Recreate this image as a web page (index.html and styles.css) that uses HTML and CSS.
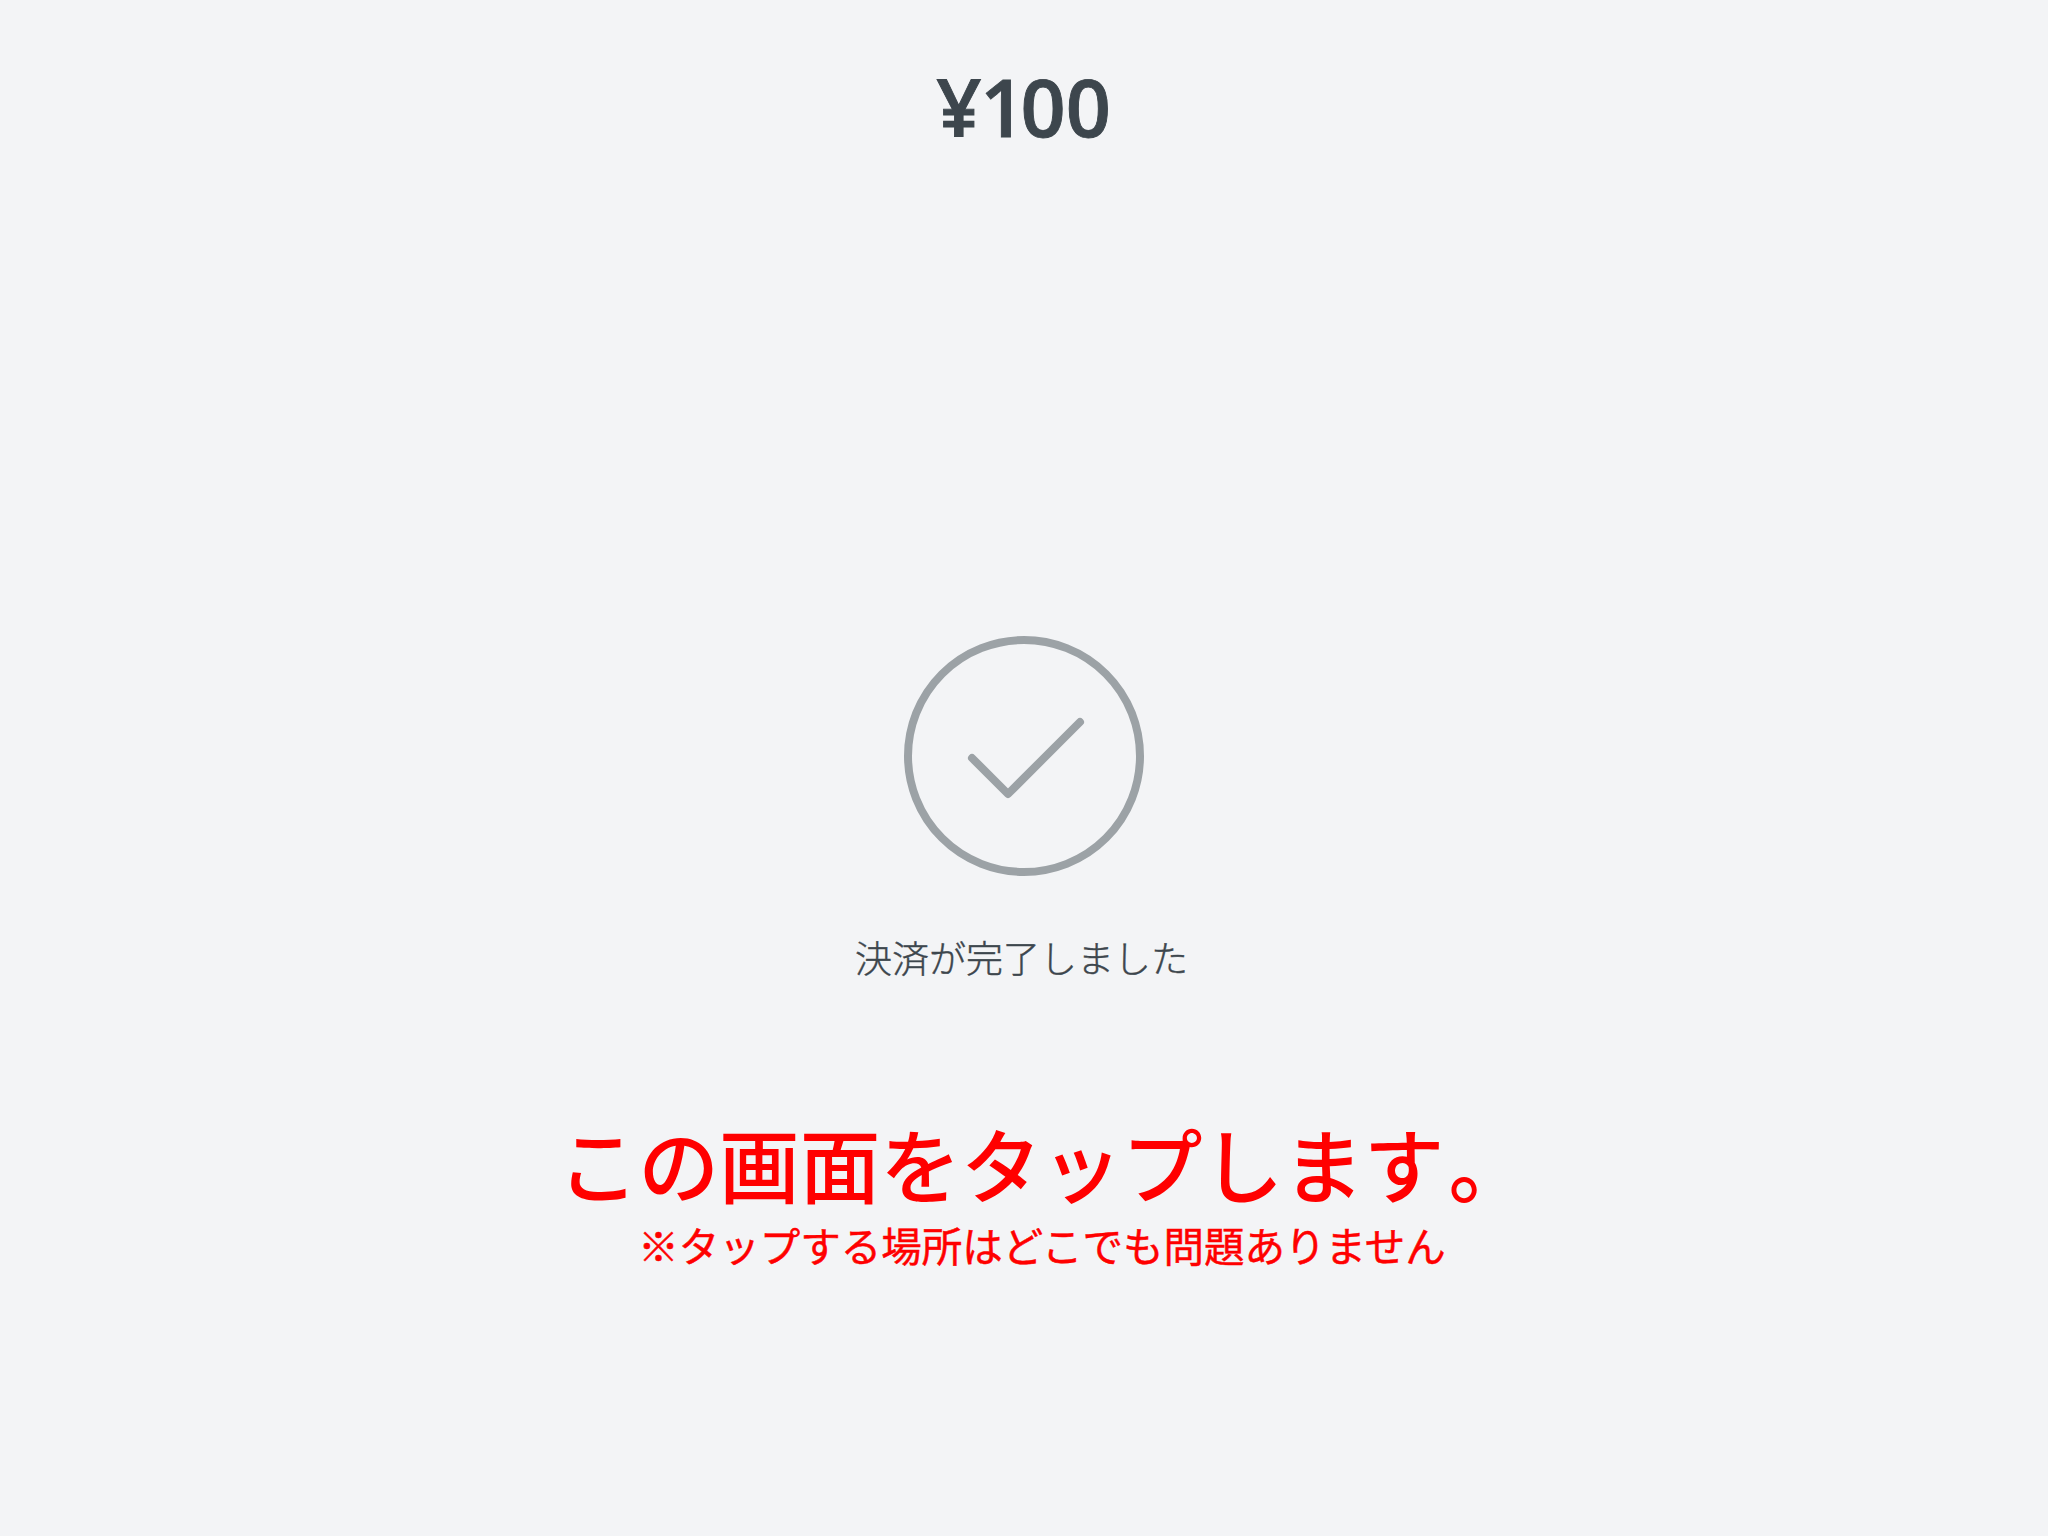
FILE: index.html
```html
<!DOCTYPE html>
<html lang="ja">
<head>
  <meta charset="UTF-8">
  <meta name="viewport" content="width=device-width, initial-scale=1.0">
  <title>決済完了</title>
  <link rel="stylesheet" href="styles.css">
</head>
<body>
  <div class="screen">
    <h1 class="amount"><span class="yen">¥</span><span class="one">1</span>00</h1>
    <svg class="check" viewBox="0 0 240 240" fill="none">
      <circle cx="120" cy="120" r="116"/>
      <path d="M68 122L104 158L176 86"/>
    </svg>
    <p class="status">決済が完了しました</p>
    <p class="tap">この画面をタップします<span class="period">。</span></p>
    <p class="note">※タップする場所はどこでも問題ありません</p>
  </div>
</body>
</html>
```

FILE: styles.css
```css
body {
  margin: 0;
  background-color: #f3f4f6;
  font-family: 'Noto Sans CJK JP', sans-serif;
}

h1, p {
  margin: 0;
  white-space: nowrap;
}

.screen {
  display: flex;
  flex-direction: column;
  align-items: center;
  height: 1536px;
  overflow: hidden;
}

.amount {
  padding-top: 57px;
  padding-right: 1px;
  font-family: 'Open Sans', sans-serif;
  font-size: 79px;
  font-weight: 600;
  line-height: 100px;
  color: #3d464d;
  -webkit-text-stroke: 0.9px #3d464d;
}

.yen {
  letter-spacing: -1px;
}

.one {
  letter-spacing: -5px;
}

.check {
  width: 240px;
  height: 240px;
  margin-top: 479px;
  stroke: #9ca2a6;
  stroke-width: 8;
  stroke-linecap: round;
  stroke-linejoin: round;
}

.status {
  margin-top: 51px;
  padding-right: 5px;
  font-size: 37px;
  font-weight: 300;
  line-height: 60px;
  color: #3d464d;
  -webkit-text-stroke: 0.4px #3d464d;
}

.tap {
  margin-top: 125px;
  padding-left: 35px;
  font-size: 80.6px;
  font-weight: 500;
  line-height: 100px;
  color: #f00;
}

.period {
  margin-left: 4px;
  margin-right: -4px;
}

.note {
  margin-top: 3px;
  padding-left: 36px;
  font-size: 40.5px;
  font-weight: 400;
  line-height: 60px;
  color: #f00;
  -webkit-text-stroke: 0.5px #f00;
}
```
